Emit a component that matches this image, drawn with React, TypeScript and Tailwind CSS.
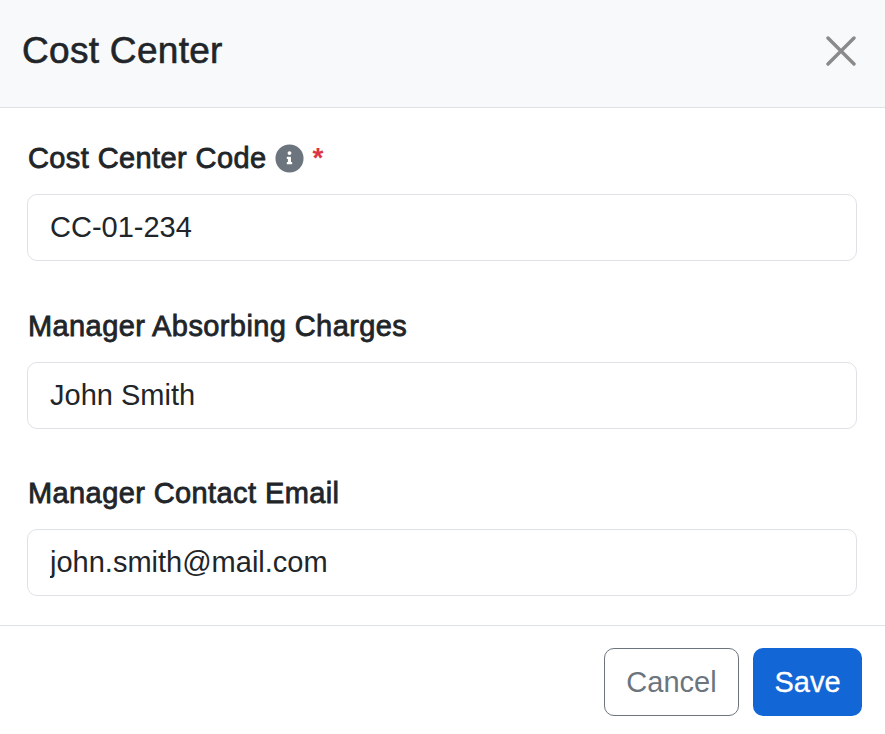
const FONT = "font-['Liberation_Sans',Arial,sans-serif]"

function Field({ label, value, children, className }: { label: string; value: string; children?: React.ReactNode; className?: string }) {
  return (
    <div className={className}>
      <div className="flex items-center h-[28px] pl-px">
        <label className="text-[29px] leading-[28px] font-normal tracking-[0.4px] text-[#212529] [-webkit-text-stroke:0.8px_#212529]">{label}</label>
        {children}
      </div>
      <input
        readOnly
        value={value}
        className="mt-[22px] block w-full h-[67px] px-[22px] rounded-[10px] border border-[#dee2e6] bg-white text-[29px] text-[#212529] outline-none"
      />
    </div>
  )
}

export default function App() {
  return (
    <div className={`${FONT} w-[885px] h-[734px] bg-white overflow-hidden`}>
      <header className="flex items-center justify-between h-[108px] pl-[22px] pr-[29px] pb-[6px] bg-[#f8f9fa] border-b border-[#dee2e6]">
        <h1 className="text-[37px] leading-none tracking-[0.3px] text-[#212529] [-webkit-text-stroke:0.6px_#212529]">Cost Center</h1>
        <svg viewBox="0 0 30 30" className="w-[30px] h-[30px] stroke-[#8a8a8a]" strokeWidth={3.4} strokeLinecap="round">
          <path d="M2 2 L28 28 M28 2 L2 28" />
        </svg>
      </header>

      <div className="pl-[27px] pr-[28px] pt-[36px] h-[518px] border-b border-[#dee2e6]">
        <Field label="Cost Center Code" value="CC-01-234">
          <svg viewBox="0 0 512 512" className="ml-[8px] w-[29px] h-[29px] fill-[#6c757d]">
            <path fillRule="evenodd" d="M256 8a248 248 0 1 0 0 496 248 248 0 0 0 0-496zm0 118a34 34 0 1 1 0 68 34 34 0 0 1 0-68zm48 222c0 6-5 10-10 10h-76c-6 0-10-4-10-10v-20c0-6 4-10 10-10h10v-54h-10c-6 0-10-4-10-10v-20c0-6 4-10 10-10h54c6 0 10 4 10 10v84h12c5 0 10 4 10 10v20z" />
          </svg>
          <span className="ml-[9px] text-[28px] leading-[28px] text-[#dc3545] font-bold">*</span>
        </Field>
        <Field label="Manager Absorbing Charges" value="John Smith" className="mt-[51px]" />
        <Field label="Manager Contact Email" value="john.smith@mail.com" className="mt-[50px]" />
      </div>

      <footer className="flex justify-end gap-[14px] pt-[22px] pr-[23px]">
        <button className="w-[135px] h-[68px] pt-[2px] rounded-[10px] border border-[#6c757d] bg-white text-[29px] text-[#6c757d]">Cancel</button>
        <button className="w-[109px] h-[68px] pt-[2px] rounded-[10px] bg-[#1266d6] text-[29px] text-white [-webkit-text-stroke:0.3px_#ffffff]">Save</button>
      </footer>
    </div>
  )
}
